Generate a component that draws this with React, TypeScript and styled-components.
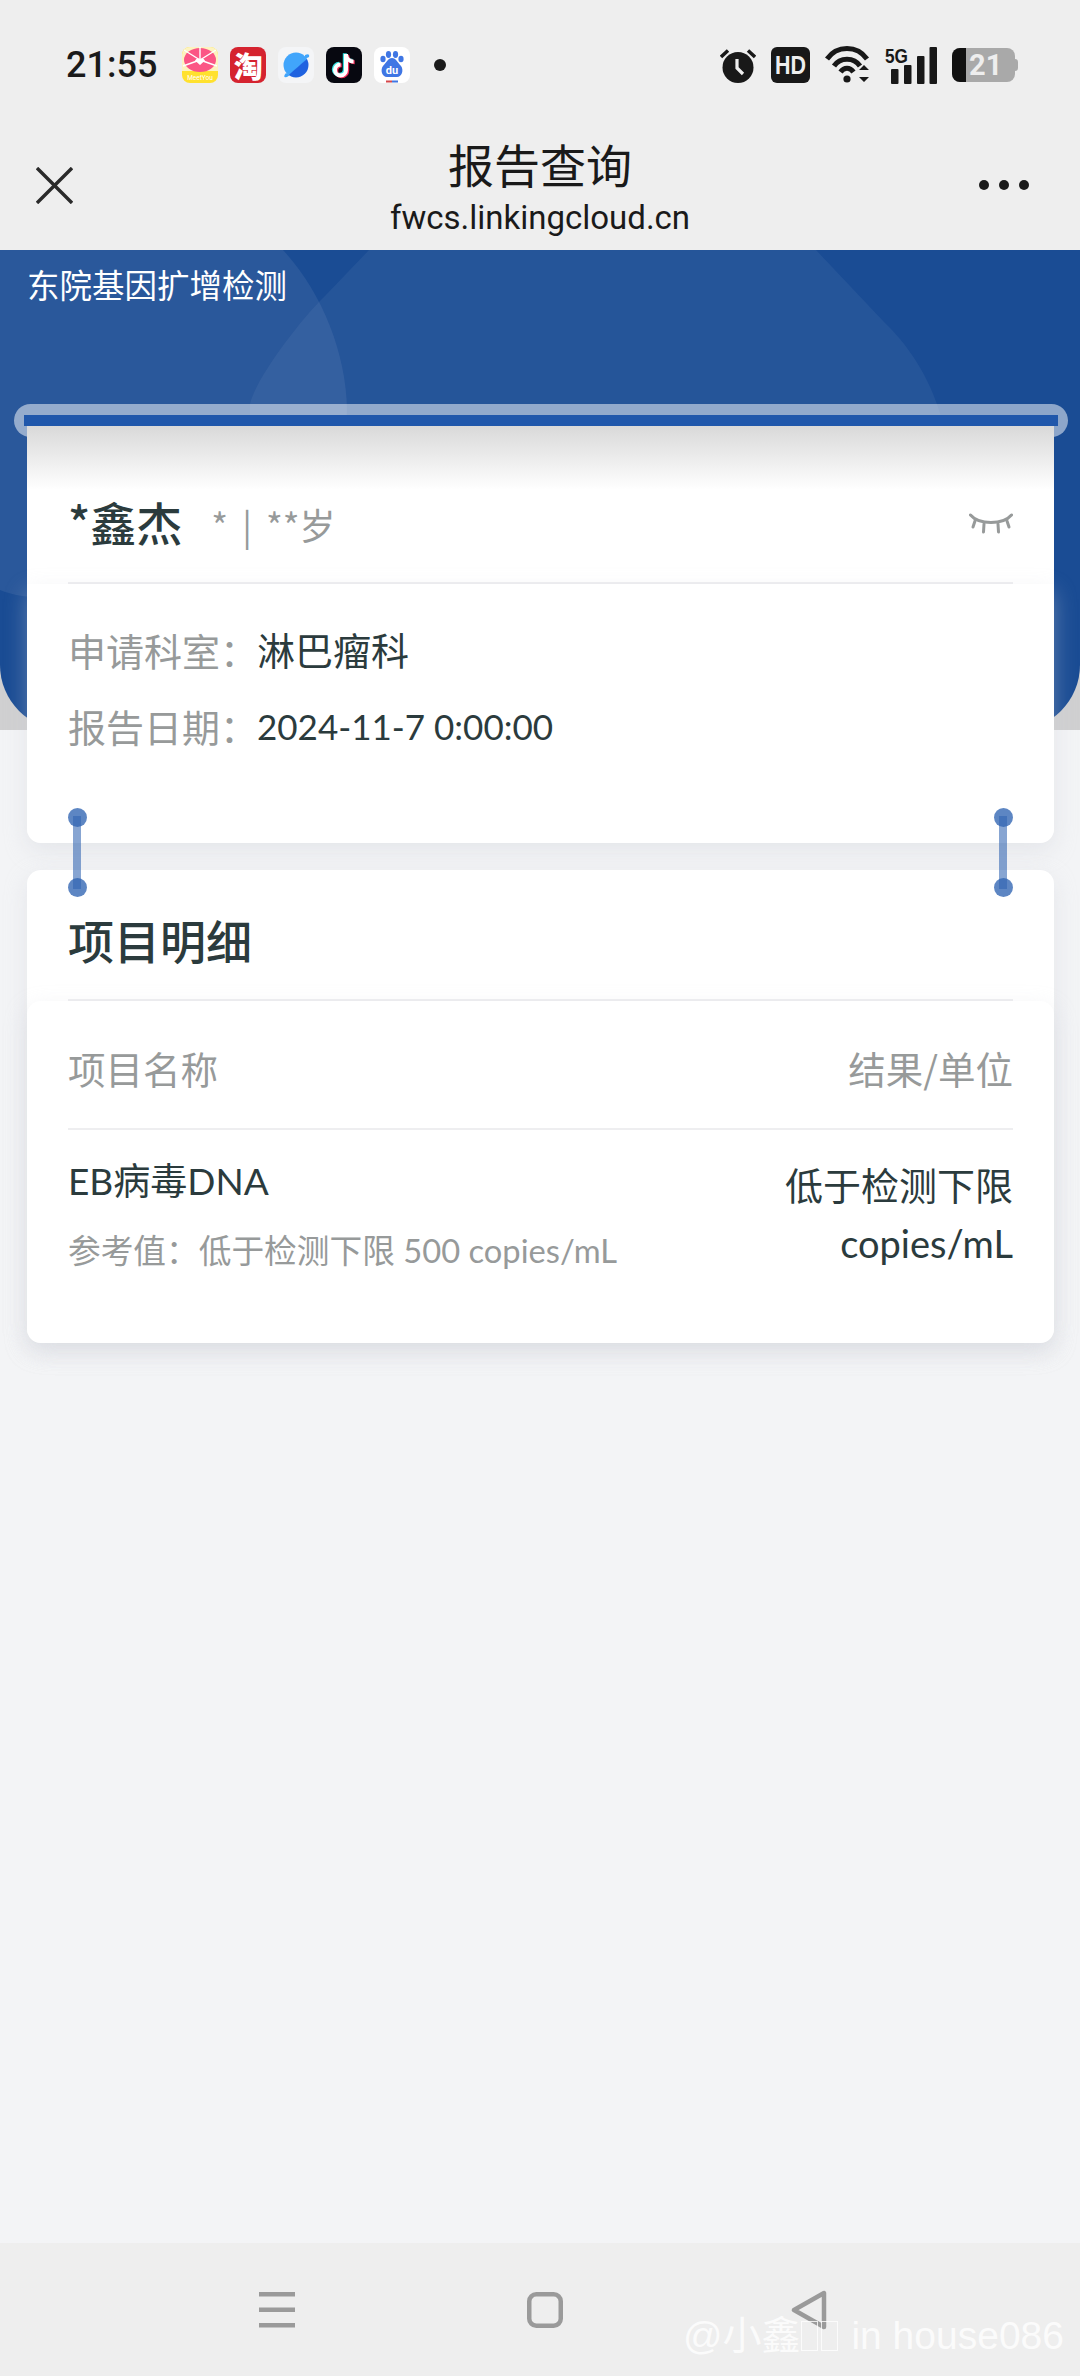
import React from 'react';
import styled, { createGlobalStyle } from 'styled-components';

const GlobalStyle = createGlobalStyle`
  html, body { margin: 0; padding: 0; background: #f3f4f6; }
  * { box-sizing: border-box; }
`;

const CJK = `"Noto Sans CJK SC", sans-serif`;
const BODY = `Lato, "Noto Sans CJK SC", sans-serif`;
const DARK = '#2b3b3d';
const GRAY = '#979a9a';

const Page = styled.div`
  width: 1080px;
  height: 2376px;
  display: flex;
  flex-direction: column;
  overflow: hidden;
  background: #f3f4f6;
  font-family: ${BODY};
`;

// --- Top chrome ---
const TopChrome = styled.header`
  height: 250px;
  flex: none;
  background: #eeeeee;
`;

const StatusBar = styled.div`
  height: 130px;
  display: flex;
  align-items: center;
  padding: 0 62px 0 66px;
`;

const Clock = styled.span`
  margin-right: 25px;
  font-family: Roboto, sans-serif;
  font-weight: 500;
  font-size: 36px;
  color: #1a1a1a;
`;

const AppIcons = styled.div`
  display: flex;
  align-items: center;
  gap: 12px;
`;

const TaobaoTile = styled.div`
  width: 36px;
  height: 36px;
  display: flex;
  align-items: center;
  justify-content: center;
  border-radius: 8px;
  background: #d5232f;
  font-family: ${CJK};
  font-weight: 900;
  font-size: 29px;
  line-height: 36px;
  color: #ffffff;
`;

const MoreDot = styled.span`
  width: 12px;
  height: 12px;
  margin-left: 12px;
  border-radius: 50%;
  background: #1a1a1a;
`;

const SystemIcons = styled.div`
  margin-left: auto;
  display: flex;
  align-items: center;
  gap: 15px;
`;

const Battery = styled.div`
  position: relative;
  width: 63px;
  height: 34px;
  margin-right: 3px;
  display: flex;
  border-radius: 8px;
  background: #a9a9a9;

  &::after {
    content: '';
    position: absolute;
    left: 63px;
    top: 11px;
    width: 3px;
    height: 12px;
    border-radius: 0 3px 3px 0;
    background: #a9a9a9;
  }
`;

const BatteryFill = styled.span`
  width: 14px;
  border-radius: 8px 0 0 8px;
  background: #111111;
`;

const BatteryLevel = styled.span`
  padding-left: 3px;
  font-family: Roboto, sans-serif;
  font-weight: 700;
  font-size: 29px;
  line-height: 34px;
  color: #eeeeee;
`;

const NavBar = styled.div`
  height: 120px;
  display: grid;
  grid-template-columns: 1fr auto 1fr;
  align-items: start;
  padding: 0 51px;
`;

const CloseButton = styled.div`
  height: 110px;
  margin-left: -15px;
  display: flex;
  align-items: center;
`;

const MoreButton = styled.div`
  height: 110px;
  display: flex;
  align-items: center;
  justify-content: flex-end;
  gap: 10px;
`;

const NavDot = styled.span`
  width: 10px;
  height: 10px;
  border-radius: 50%;
  background: #1a1a1a;
`;

const TitleBlock = styled.div`
  padding-top: 3px;
  text-align: center;
`;

const Title = styled.div`
  font-family: ${CJK};
  font-size: 46px;
  line-height: 60px;
  color: #1a1a1a;
`;

const Url = styled.div`
  margin-top: 3px;
  font-family: Roboto, sans-serif;
  font-size: 33px;
  line-height: 44px;
  color: #1a1a1a;
`;

// --- Banner ---
const BannerBack = styled.div`
  height: 480px;
  flex: none;
  background: #d0d0d1;
`;

const Banner = styled.div`
  position: relative;
  height: 100%;
  overflow: hidden;
  padding: 11px 27px;
  border-radius: 0 0 65px 65px;
  background: #1a4c94;
`;

const BannerArt = styled.svg`
  position: absolute;
  inset: 0;
`;

const Hospital = styled.div`
  position: relative;
  font-family: ${CJK};
  font-size: 32.5px;
  line-height: 46px;
  color: #ffffff;
`;

// --- Cards ---
const Content = styled.main`
  position: relative;
  margin-top: -326px;
  padding: 0 26px 0 27px;
`;

const Slot = styled.div`
  height: 33px;
  margin: 0 -14px 0 -13px;
  padding: 11px 10px 0;
  border-radius: 17px;
  background: rgba(255, 255, 255, 0.5);
`;

const SlotInner = styled.div`
  height: 11px;
  background: #2057ab;
`;

const Card = styled.section`
  position: relative;
  background: #ffffff;
  border-radius: 0 0 14px 14px;
`;

const ReportCard = styled(Card)`
  margin-top: -11px;
`;

const CardTop = styled.div`
  background: linear-gradient(#d9d9d9, #ffffff 64px);
`;

const NameRow = styled.div`
  height: 158px;
  margin: 0 41px;
  padding: 64px 0 30px;
  display: flex;
  align-items: center;
  border-bottom: 2px solid #eeeef0;
`;

const Name = styled.span`
  font-family: ${CJK};
  font-weight: 500;
  font-size: 46px;
  color: ${DARK};
`;

const Meta = styled.span`
  margin: 6px 0 0 29px;
  font-family: ${CJK};
  font-size: 36px;
  word-spacing: 6px;
  color: ${GRAY};
`;

const EyeIcon = styled.svg`
  margin: 6px 0 0 auto;
`;

const Panel = styled.div<{ $rounded?: boolean }>`
  position: relative;
  border-radius: ${p => (p.$rounded ? '14px' : '0 0 14px 14px')};
  background: #ffffff;
  box-shadow: 0 8px 22px rgba(205, 208, 216, 0.38);
`;

const InfoPanel = styled(Panel)`
  padding: 28px 41px 79px;
`;

const InfoRow = styled.div`
  display: flex;
  font-size: 38px;
  line-height: 76px;
`;

const InfoLabel = styled.span`
  width: 189px;
  flex: none;
  white-space: nowrap;
  font-family: ${CJK};
  color: ${GRAY};
`;

const InfoValue = styled.span<{ $small?: boolean }>`
  font-family: ${BODY};
  font-size: ${p => (p.$small ? '35px' : '38px')};
  color: ${DARK};
`;

const Gap = styled.div`
  position: relative;
  z-index: 2;
  height: 27px;
`;

const Link = styled.div<{ $side: 'left' | 'right' }>`
  position: absolute;
  top: -35px;
  ${p => p.$side}: 41px;
  width: 19px;
  height: 89px;

  &::before {
    content: '';
    position: absolute;
    left: 5px;
    top: 8px;
    bottom: 8px;
    width: 8px;
    background: rgba(48, 100, 178, 0.58);
  }
`;

const LinkDot = styled.span<{ $end: 'top' | 'bottom' }>`
  position: absolute;
  left: 0;
  ${p => p.$end}: 0;
  width: 19px;
  height: 19px;
  border-radius: 50%;
  background: rgba(48, 100, 178, 0.78);
`;

const DetailCard = styled(Card)`
  border-radius: 14px;
  box-shadow: 0 8px 22px rgba(205, 208, 216, 0.38);
`;

const DetailHead = styled.div`
  margin: 0 41px;
  padding: 39px 0 30px;
  border-bottom: 2px solid #eeeef0;
`;

const DetailTitle = styled.h2`
  margin: 0;
  font-family: ${CJK};
  font-weight: 500;
  font-size: 46px;
  line-height: 60px;
  color: ${DARK};
`;

const DetailPanel = styled(Panel)`
  padding: 0 41px;
`;

const ColumnHead = styled.div`
  display: flex;
  justify-content: space-between;
  padding: 37px 0 30px;
  border-bottom: 2px solid #eeeef0;
  font-family: ${CJK};
  font-size: 37.5px;
  line-height: 60px;
  color: ${GRAY};
`;

const ItemRow = styled.div`
  display: flex;
  justify-content: space-between;
  padding: 26px 0 70px;
`;

const ItemName = styled.div`
  font-size: 37px;
  line-height: 50px;
  color: ${DARK};
`;

const Reference = styled.div`
  margin-top: 23px;
  font-size: 32.7px;
  line-height: 44px;
  color: ${GRAY};
`;

const Result = styled.div`
  width: 240px;
  text-align: right;
  font-size: 38px;
  line-height: 58px;
  color: ${DARK};
`;

const Spacer = styled.div`
  flex: 1;
`;

// --- Bottom navigation ---
const BottomNav = styled.footer`
  position: relative;
  height: 133px;
  flex: none;
  display: flex;
  align-items: center;
  padding-left: 259px;
  background: #eeeeee;
`;

const MenuIcon = styled.svg`
  margin-right: 232px;
`;

const HomeIcon = styled.svg`
  margin-right: 228px;
`;

const Watermark = styled.div`
  position: absolute;
  left: 683px;
  top: 70px;
  display: flex;
  align-items: center;
  white-space: pre;
  font-family: "Liberation Sans", "Noto Sans CJK SC", sans-serif;
  font-size: 39px;
  line-height: 46px;
  color: rgba(255, 255, 255, 0.78);
`;

const Tofu = styled.span`
  width: 17px;
  height: 30px;
  margin-right: 3px;
  border: 1.5px solid rgba(255, 255, 255, 0.78);
`;

// --- Status bar drawings ---
const MeetYouIcon = () => (
  <svg width={36} height={36} viewBox="0 0 36 36">
    <clipPath id="meetyou"><rect width={36} height={36} rx={8} /></clipPath>
    <g clipPath="url(#meetyou)">
      <rect width={36} height={36} fill="#ffe12e" />
      <rect width={36} height={24} fill="#fdf3c0" />
      <ellipse cx={18} cy={13} rx={16} ry={12} fill="#fb5585" />
      <path d="M18 13 L2 3 M18 13 L18 0 M18 13 L34 3 M18 13 L1 19 M18 13 L35 19" stroke="#fff" strokeWidth={1.4} />
      <path d="M18 18 l-5 -4.5 q2.5 -3.5 5 -0.5 q2.5 -3 5 0.5 Z" fill="#fff" />
      <text x={18} y={33} textAnchor="middle" fontSize={6.5} fontFamily="Roboto, sans-serif" fill="#fff">MeetYou</text>
    </g>
  </svg>
);

const PlanetIcon = () => (
  <svg width={36} height={36} viewBox="0 0 36 36">
    <defs>
      <linearGradient id="planet" x1="0.15" y1="0.1" x2="0.85" y2="0.9">
        <stop offset="0.58" stopColor="#41a5fb" />
        <stop offset="0.62" stopColor="#1f62e0" />
      </linearGradient>
    </defs>
    <rect width={36} height={36} rx={8} fill="#f4f5f7" />
    <circle cx={18} cy={18} r={12.5} fill="url(#planet)" />
    <path d="M27 8 Q32 6 31 10 L27 12 Z" fill="#41a5fb" />
    <path d="M8 26 Q4 31 9 30 L12 28 Z" fill="#41a5fb" />
  </svg>
);

const note = 'M20 7 V23 A5.5 5.5 0 1 1 14.5 17.5 M20 8 C20.5 12 24 14.5 27.5 14.5';

const TiktokIcon = () => (
  <svg width={36} height={36} viewBox="0 0 36 36" fill="none" strokeWidth={4}>
    <rect width={36} height={36} rx={8} fill="#070810" />
    <path d={note} stroke="#35e0e0" transform="translate(-1.2 -0.8)" />
    <path d={note} stroke="#f2305a" transform="translate(1.2 0.8)" />
    <path d={note} stroke="#ffffff" />
  </svg>
);

const BaiduIcon = () => (
  <svg width={36} height={36} viewBox="0 0 36 36">
    <rect width={36} height={36} rx={8} fill="#ffffff" />
    <g fill="#3f76e4">
      <ellipse cx={9} cy={12} rx={2.6} ry={3.2} />
      <ellipse cx={14.5} cy={7.5} rx={2.6} ry={3.4} />
      <ellipse cx={21.5} cy={7.5} rx={2.6} ry={3.4} />
      <ellipse cx={27} cy={12} rx={2.6} ry={3.2} />
      <path d="M18 11 C22 11 24 16 27 19 C30 23 28 30 23 30 H13 C8 30 6 23 9 19 C12 16 14 11 18 11 Z" />
    </g>
    <text x={18} y={27} textAnchor="middle" fontSize={11} fontWeight={700} fontFamily="Roboto, sans-serif" fill="#fff">du</text>
    <rect x={12} y={33.5} width={6} height={2} fill="#d5474a" />
    <rect x={18} y={33.5} width={6} height={2} fill="#3f76e4" />
  </svg>
);

const AlarmIcon = () => (
  <svg width={36} height={36} viewBox="0 0 36 36">
    <circle cx={18} cy={20.5} r={15.5} fill="#181818" />
    <path d="M1 10 L8 3.5 M35 10 L28 3.5" stroke="#181818" strokeWidth={3.5} />
    <path d="M17 12 V21 L23 27" fill="none" stroke="#eeeeee" strokeWidth={3.2} />
  </svg>
);

const HdIcon = () => (
  <svg width={39} height={36} viewBox="0 0 39 36">
    <rect width={39} height={36} rx={6} fill="#181818" />
    <text x={4} y={27} fontSize={25} fontWeight={700} fontFamily={'"Liberation Sans", sans-serif'} textLength={31} lengthAdjust="spacingAndGlyphs" fill="#eeeeee">HD</text>
  </svg>
);

const WifiIcon = () => (
  <svg width={45} height={38} viewBox="0 0 45 38" fill="none" stroke="#181818" strokeWidth={5}>
    <path d="M2 13 C12 -1 32 -1 42 13" />
    <path d="M9 20 C15 11 29 11 35 20" />
    <path d="M15.5 26 C19 21 25 21 28.5 26" />
    <circle cx={22} cy={33} r={3.6} fill="#181818" stroke="none" />
    <path d="M34 24 L39 19 L44 24 Z M34 31 L39 36 L44 31 Z" fill="#181818" stroke="none" />
  </svg>
);

const SignalIcon = () => (
  <svg width={52} height={38} viewBox="0 0 52 38" fill="#181818">
    <text x={0} y={17} fontSize={20} fontWeight={700} fontFamily={'"Liberation Sans", sans-serif'} textLength={23} lengthAdjust="spacingAndGlyphs">5G</text>
    <rect x={6} y={23} width={7.5} height={15} rx={1} />
    <rect x={19} y={19} width={7.5} height={19} rx={1} />
    <rect x={32} y={10} width={7.5} height={28} rx={1} />
    <rect x={44.5} y={1} width={7.5} height={37} rx={1} />
  </svg>
);

const App = () => {
  return (
    <Page>
      <GlobalStyle />
      <TopChrome>
        <StatusBar>
          <Clock>21:55</Clock>
          <AppIcons>
            <MeetYouIcon />
            <TaobaoTile>淘</TaobaoTile>
            <PlanetIcon />
            <TiktokIcon />
            <BaiduIcon />
            <MoreDot />
          </AppIcons>
          <SystemIcons>
            <AlarmIcon />
            <HdIcon />
            <WifiIcon />
            <SignalIcon />
            <Battery>
              <BatteryFill />
              <BatteryLevel>21</BatteryLevel>
            </Battery>
          </SystemIcons>
        </StatusBar>
        <NavBar>
          <CloseButton>
            <svg width={37} height={37} viewBox="0 0 37 37" stroke="#2a2a2a" strokeWidth={3.4}>
              <path d="M1 1 L36 36 M36 1 L1 36" />
            </svg>
          </CloseButton>
          <TitleBlock>
            <Title>报告查询</Title>
            <Url>fwcs.linkingcloud.cn</Url>
          </TitleBlock>
          <MoreButton>
            <NavDot />
            <NavDot />
            <NavDot />
          </MoreButton>
        </NavBar>
      </TopChrome>

      <BannerBack>
        <Banner>
          <BannerArt width={1080} height={480} viewBox="0 0 1080 480">
            <path d="M0 0 H283 C320 40 346 100 347 160 C347 260 100 380 0 340 Z" fill="rgba(255,255,255,0.07)" />
            <path d="M369 0 H816 L885 73 C905 92 930 125 942 170 V480 H250 V154 C255 130 300 70 324 47 Z" fill="rgba(255,255,255,0.05)" />
          </BannerArt>
          <Hospital>东院基因扩增检测</Hospital>
        </Banner>
      </BannerBack>

      <Content>
        <Slot>
          <SlotInner />
        </Slot>
        <ReportCard>
          <CardTop>
            <NameRow>
              <Name>*鑫杰</Name>
              <Meta>* | **岁</Meta>
              <EyeIcon width={44} height={22} viewBox="0 0 44 22" fill="none" stroke="#979a9a" strokeWidth={3} strokeLinecap="round">
                <path d="M1.5 2 C10 12 34 12 42.5 2" />
                <path d="M6 8 L4 14 M15 11 L14.5 19 M29 11 L29.5 19 M38 8 L40 14" />
              </EyeIcon>
            </NameRow>
          </CardTop>
          <InfoPanel>
            <InfoRow>
              <InfoLabel>申请科室：</InfoLabel>
              <InfoValue>淋巴瘤科</InfoValue>
            </InfoRow>
            <InfoRow>
              <InfoLabel>报告日期：</InfoLabel>
              <InfoValue $small>2024-11-7 0:00:00</InfoValue>
            </InfoRow>
          </InfoPanel>
        </ReportCard>

        <Gap>
          <Link $side="left">
            <LinkDot $end="top" />
            <LinkDot $end="bottom" />
          </Link>
          <Link $side="right">
            <LinkDot $end="top" />
            <LinkDot $end="bottom" />
          </Link>
        </Gap>

        <DetailCard>
          <DetailHead>
            <DetailTitle>项目明细</DetailTitle>
          </DetailHead>
          <DetailPanel $rounded>
            <ColumnHead>
              <span>项目名称</span>
              <span>结果/单位</span>
            </ColumnHead>
            <ItemRow>
              <div>
                <ItemName>EB病毒DNA</ItemName>
                <Reference>参考值：低于检测下限 500 copies/mL</Reference>
              </div>
              <Result>低于检测下限 copies/mL</Result>
            </ItemRow>
          </DetailPanel>
        </DetailCard>
      </Content>

      <Spacer />

      <BottomNav>
        <MenuIcon width={36} height={36} viewBox="0 0 36 36" fill="#9a9a9a">
          <rect y={0} width={36} height={4.5} />
          <rect y={15.5} width={36} height={4.5} />
          <rect y={31} width={36} height={4.5} />
        </MenuIcon>
        <HomeIcon width={36} height={36} viewBox="0 0 36 36" fill="none" stroke="#9a9a9a" strokeWidth={4.5}>
          <rect x={2.25} y={2.25} width={31.5} height={31.5} rx={7} />
        </HomeIcon>
        <svg width={36} height={40} viewBox="0 0 36 40" fill="none" stroke="#9a9a9a" strokeWidth={4.5} strokeLinejoin="round">
          <path d="M33 3 V37 L3 20 Z" />
        </svg>
        <Watermark>
          @小鑫<Tofu /><Tofu /> in house086
        </Watermark>
      </BottomNav>
    </Page>
  );
};

export default App;
